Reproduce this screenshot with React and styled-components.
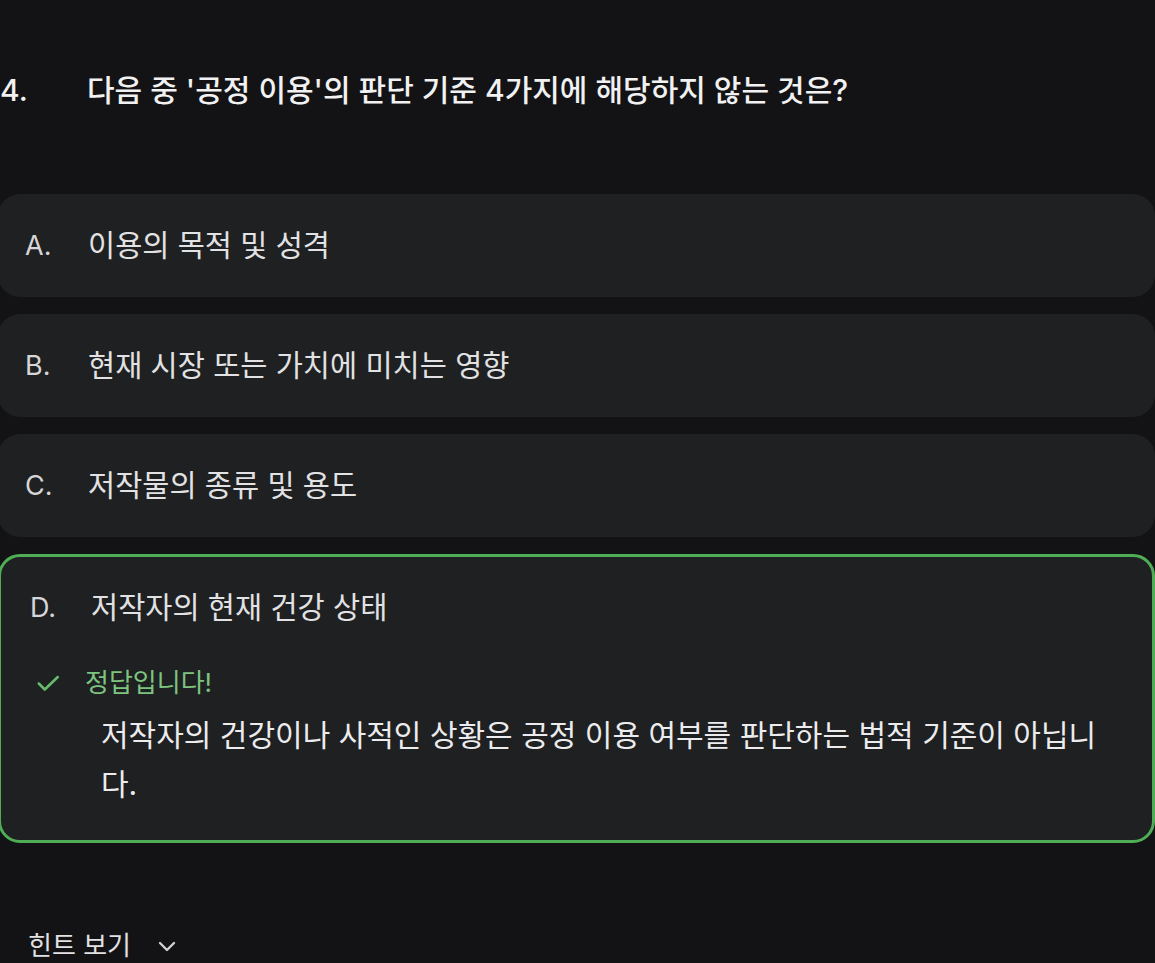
import React from "react";
import styled, { createGlobalStyle } from "styled-components";

const Global = createGlobalStyle`
  html, body { margin: 0; padding: 0; background: #131315; }
  body { font-family: "Inter", "Noto Sans CJK KR", sans-serif; -webkit-font-smoothing: antialiased; }
`;

const Page = styled.div`
  width: 1155px;
  height: 963px;
  overflow: hidden;
  background: #131315;
  color: #e4e4e6;
`;

const Inner = styled.div`
  margin-left: -2px;
  width: 1157px;
  padding-top: 68px;
`;

const Question = styled.h2`
  margin: 0;
  display: flex;
  font-family: "Inter", "Noto Sans CJK KR", sans-serif;
  font-weight: 500;
  font-size: 30px;
  line-height: 44px;
  color: #f1f1f2;
`;

const QNum = styled.span`
  width: 89px;
  flex: none;
  padding-left: 2px;
  box-sizing: border-box;
`;

const Options = styled.div`
  margin-top: 82px;
  display: flex;
  flex-direction: column;
  gap: 17px;
`;

const Card = styled.div`
  background: #1f2022;
  border-radius: 22px;
  border: 3px solid ${(p) => (p.$correct ? "#4fae55" : "transparent")};
  padding: ${(p) => (p.$correct ? "30px 30px 31px 29px" : "28px 24px 28px 24px")};
  box-sizing: border-box;
`;

const OptionRow = styled.div`
  display: flex;
  align-items: center;
  font-size: 29.5px;
  line-height: 41px;
  font-weight: 400;
  color: #e2e2e4;
`;

const Letter = styled.span`
  width: ${(p) => (p.$correct ? "61px" : "63px")};
  flex: none;
  font-family: "Inter", sans-serif;
  font-size: 27px;
  color: #d6d6d8;
`;

const Feedback = styled.div`
  margin-top: 38px;
  padding-left: 5px;
`;

const FeedbackHead = styled.div`
  display: flex;
  align-items: center;
  gap: 24px;
  color: #7cc47f;
  font-size: 26px;
  line-height: 34px;
  font-weight: 400;
`;

const Explanation = styled.p`
  margin: 11px 0 0 66px;
  font-size: 30px;
  line-height: 49px;
  color: #ececee;
  max-width: 1005px;
`;

const Hint = styled.button`
  margin: 86px 0 0 30px;
  padding: 0;
  background: none;
  border: none;
  display: flex;
  align-items: center;
  gap: 24px;
  font-family: "Inter", "Noto Sans CJK KR", sans-serif;
  font-size: 26px;
  line-height: 34px;
  color: #e2e2e4;
`;

const Check = () => (
  <svg width="26" height="26" viewBox="0 0 24 24" fill="none" stroke="#66bb6a" strokeWidth="2.4" strokeLinecap="round" strokeLinejoin="round">
    <path d="M3.5 12.5l5.5 5.5L21 6.5" />
  </svg>
);

const Chevron = () => (
  <svg width="24" height="24" viewBox="0 0 24 24" fill="none" stroke="#d0d0d2" strokeWidth="2.4" strokeLinecap="round" strokeLinejoin="round">
    <path d="M5 9l7 7 7-7" />
  </svg>
);

const options = [
  { l: "A.", t: "이용의 목적 및 성격" },
  { l: "B.", t: "현재 시장 또는 가치에 미치는 영향" },
  { l: "C.", t: "저작물의 종류 및 용도" },
];

export default function App() {
  return (
    <Page>
      <Global />
      <Inner>
        <Question>
          <QNum>4.</QNum>
          <span>다음 중 '공정 이용'의 판단 기준 4가지에 해당하지 않는 것은?</span>
        </Question>
        <Options>
          {options.map((o) => (
            <Card key={o.l}>
              <OptionRow>
                <Letter>{o.l}</Letter>
                <span>{o.t}</span>
              </OptionRow>
            </Card>
          ))}
          <Card $correct>
            <OptionRow>
              <Letter $correct>D.</Letter>
              <span>저작자의 현재 건강 상태</span>
            </OptionRow>
            <Feedback>
              <FeedbackHead>
                <Check />
                <span>정답입니다!</span>
              </FeedbackHead>
              <Explanation>
                저작자의 건강이나 사적인 상황은 공정 이용 여부를 판단하는 법적 기준이 아닙니다.
              </Explanation>
            </Feedback>
          </Card>
        </Options>
        <Hint>
          <span>힌트 보기</span>
          <Chevron />
        </Hint>
      </Inner>
    </Page>
  );
}
